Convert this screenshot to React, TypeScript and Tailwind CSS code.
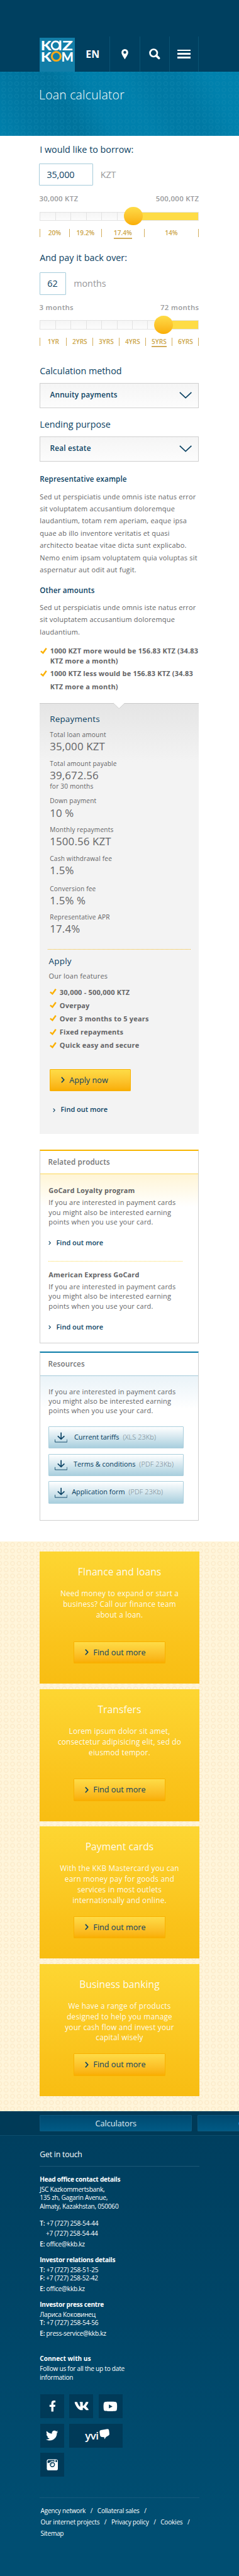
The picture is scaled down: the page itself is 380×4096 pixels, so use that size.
import type { ReactNode } from 'react'
import { FaFacebookF, FaTwitter, FaVk, FaYoutube } from 'react-icons/fa'

function Logo() {
  return (
    <svg viewBox="0 0 198 192" className="h-64 w-66 bg-[#127ea8]" aria-label="Kazkom">
      <g fill="#fff" fontFamily="Lato, sans-serif" fontWeight="900" fontSize="76">
        <text x="6" y="71" textLength="60" lengthAdjust="spacingAndGlyphs">K</text>
        <text x="128" y="71" textLength="60" lengthAdjust="spacingAndGlyphs">Z</text>
        <text x="6" y="134" textLength="60" lengthAdjust="spacingAndGlyphs">K</text>
        <text x="123" y="134" textLength="69" lengthAdjust="spacingAndGlyphs">M</text>
      </g>
      <circle cx="91" cy="44" r="23" fill="none" stroke="#fff" strokeWidth="10" />
      <path d="M117 16V71" stroke="#fff" strokeWidth="11" />
      <circle cx="94" cy="105" r="25" fill="#127ea8" stroke="#f9a91a" strokeWidth="11" />
    </svg>
  )
}

function Chevron({ className }: { className: string }) {
  return (
    <svg viewBox="0 0 7 12" className={className} fill="none" stroke="#0b4263" strokeWidth="2">
      <path d="M1 1L5.6 6L1 11" />
    </svg>
  )
}

function Check({ className }: { className: string }) {
  return (
    <svg viewBox="0 0 13 12" className={`h-12 w-13 shrink-0 ${className}`} fill="none" stroke="#fbb000" strokeWidth="2.9">
      <path d="M1 6.4L5.2 9.8L11.6 1" />
    </svg>
  )
}

function Slider({ segments, fill, knob }: { segments: number; fill: string; knob: string }) {
  return (
    <div className="relative flex h-17 w-300 border border-[#e3e3e3] bg-gradient-to-b from-[#f5f5f5] to-[#fcfcfc]">
      {Array.from({ length: segments }, (_, i) => (
        <span key={i} className="w-29 border-r border-[#e3e3e3]" />
      ))}
      <span className={`absolute inset-y-0 right-0 bg-[#fedc46] ${fill}`} />
      <span className={`absolute -top-10.5 size-35 rounded-full bg-gradient-to-b from-[#fedc46] to-[#f9ae00] ${knob}`} />
    </div>
  )
}

function Scale({ items }: { items: { label: string; width: string; active?: boolean }[] }) {
  return (
    <div className="mt-16 flex h-15 w-300 border-r border-[#d3ad5c] text-[10.12px] font-semibold leading-15 text-[#cca54a]">
      {items.map((it) => (
        <div key={it.label} className={`flex justify-center border-l border-[#d3ad5c] ${it.width}`}>
          <span className={it.active ? 'h-18 border-b-2 border-[#d3ad5c]' : 'h-18'}>{it.label}</span>
        </div>
      ))}
    </div>
  )
}

function Select({ value }: { value: string }) {
  return (
    <div className="flex h-47 items-center justify-between border border-[#cfcfcf] bg-gradient-to-b from-[#f5f5f5] to-[#fcfcfc] pl-18 pr-12">
      <span className="-mt-2 text-[11.81px] font-semibold tracking-[0.2px]">{value}</span>
      <svg viewBox="0 0 24 13" className="h-13 w-24" fill="none" stroke="#0b4263" strokeWidth="2">
        <path d="M1 1L12 11.5L23 1" />
      </svg>
    </div>
  )
}

function Figure({ label, value, className }: { label: string; value: string; className: string }) {
  return (
    <div className={className}>
      <p className="text-[10.12px] leading-16 tracking-[0.19px]">{label}</p>
      <p className="mt-0.75 text-[16.87px] leading-26 tracking-[0.14px]">{value}</p>
    </div>
  )
}

function MoreLink({ className }: { className: string }) {
  return (
    <a className={`flex items-center text-[10.97px] font-semibold leading-20 text-[#0b4263] ${className}`}>
      <Chevron className="mr-9.5 mt-1 h-8 w-5" />
      Find out more
    </a>
  )
}

function YellowButton({ children, className }: { children: ReactNode; className: string }) {
  return (
    <a className={`flex h-42 items-center rounded-[1px] border border-[#f9b000] bg-gradient-to-b from-[#fedc46] to-[#f9ae00] pb-1 text-[12.66px] text-[#0b4263] ${className}`}>
      <Chevron className="mr-9 h-12 w-7" />
      {children}
    </a>
  )
}

function Product({ name, className }: { name: string; className: string }) {
  return (
    <div className={`pl-15.5 ${className}`}>
      <h4 className="text-[10.97px] font-bold leading-18 tracking-[0.17px]">{name}</h4>
      <Blurb className="mt-5.25" />
      <MoreLink className="mt-21.25" />
    </div>
  )
}

function Blurb({ className }: { className: string }) {
  return (
    <p className={`text-[10.97px] leading-18 tracking-[0.21px] ${className}`}>
      If you are interested in payment cards
      <br />
      you might also be interested earning
      <br />
      points when you use your card.
    </p>
  )
}

function Download({ name, kind, gap }: { name: string; kind: string; gap: string }) {
  return (
    <a className="flex h-42 w-255 items-center rounded-[1px] border border-[#a9cedc] bg-gradient-to-b from-white to-[#a9cfde] pl-11 text-[10.9px]">
      <svg viewBox="0 0 24 20" className="h-20 w-24" fill="none" stroke="#0b4263">
        <path d="M12 1V13.5M5.7 7.5L12 13.5L18.3 7.5" strokeWidth="2" />
        <path d="M.5 14V19H23.5V14" strokeWidth="1.1" />
      </svg>
      <span className={`-mt-1.5 text-[#003a5c] ${gap}`}>{name}</span>
      <span className="-mt-1.5 ml-7 text-[10.97px] font-light tracking-[0.08px] text-[#70828c]">{kind}</span>
    </a>
  )
}

function Promo({ title, lines }: { title: string; lines: string[] }) {
  return (
    <section className="flex h-249 flex-col items-center bg-gradient-to-b from-[#fdd632] via-[#fac31b] via-70% to-[#f8bd12] pt-26 text-white">
      <h3 className="text-[15.6px] leading-26 tracking-[0.08px] text-white/95">{title}</h3>
      <p className="mt-16.75 h-80 text-center text-[11.81px] leading-20 tracking-[0.21px] text-white/95">
        {lines.map((l) => (
          <span key={l} className="block">{l}</span>
        ))}
      </p>
      <YellowButton className="mt-20.25 w-172 pl-19.5">Find out more</YellowButton>
    </section>
  )
}

function Field({ k, v }: { k: string; v: string }) {
  return (
    <p>
      <b className="font-semibold">{k}</b> {v}
    </p>
  )
}

function Tile({ children, wide }: { children: ReactNode; wide?: boolean }) {
  return <a className={`flex h-45 items-center justify-center bg-[#003a58] ${wide ? 'w-100' : 'w-45'}`}>{children}</a>
}

const rates = [
  { label: '20%', width: 'w-55' },
  { label: '19.2%', width: 'w-61' },
  { label: '17.4%', width: 'w-80', active: true },
  { label: '14%', width: 'w-103' },
]

const years = [
  { label: '1YR', width: 'w-50' },
  { label: '2YRS', width: 'w-50' },
  { label: '3YRS', width: 'w-50' },
  { label: '4YRS', width: 'w-50' },
  { label: '5YRS', width: 'w-50', active: true },
  { label: '6YRS', width: 'w-50' },
]

const promos = [
  { title: 'FInance and loans', lines: ['Need money to expand or start a', 'business? Call our finance team', 'about a loan.'] },
  { title: 'Transfers', lines: ['Lorem ipsum dolor sit amet,', 'consectetur adipisicing elit, sed do', 'eiusmod tempor.'] },
  { title: 'Payment cards', lines: ['With the KKB Mastercard you can', 'earn money pay for goods and', 'services in most outlets', 'internationally and online.'] },
  { title: 'Business banking', lines: ['We have a range of products', 'designed to help you manage', 'your cash flow and invest your', 'capital wisely'] },
]

const linkRows = [['Agency network', 'Collateral sales'], ['Our internet projects', 'Privacy policy', 'Cookies']]

export default function App() {
  return (
    <div className="flex h-[4096px] w-[380px] flex-col overflow-hidden bg-white font-['Open_Sans',sans-serif] text-[#636466] [--spacing:0.84367px]">
      <header className="flex h-135 shrink-0 items-end bg-[#004060] pl-75">
        <Logo />
        <nav className="flex h-66 text-white">
          <a className="flex w-67 items-center border-r border-[#0a5374] pl-20.5 text-[16.03px] font-bold">EN</a>
          <a className="flex w-56 items-center justify-center border-r border-[#0a5374]">
            <svg viewBox="0 0 13 20" className="h-20 w-13" fill="#fff">
              <path fillRule="evenodd" d="M6.5 0A6.3 6.3 0 0 0 .2 6.4C.2 11 4.5 14.5 6.5 20C8.5 14.5 12.8 11 12.8 6.4A6.3 6.3 0 0 0 6.5 0ZM6.5 3.5A2.7 2.7 0 1 1 6.5 8.9A2.7 2.7 0 0 1 6.5 3.5Z" />
            </svg>
          </a>
          <a className="flex w-56 items-center justify-center border-r border-[#0a5374]">
            <svg viewBox="0 0 21 21" className="size-21" fill="none" stroke="#fff">
              <circle cx="8.6" cy="8.6" r="6.8" strokeWidth="3.2" />
              <path d="M13.5 13.5L18.6 18.3" strokeWidth="4.2" strokeLinecap="round" />
            </svg>
          </a>
          <a className="flex w-55 flex-col items-center justify-center gap-4 border-r border-[#0a5374] pb-1">
            <span className="h-3 w-25 bg-white" />
            <span className="h-3 w-25 bg-white" />
            <span className="h-3 w-25 bg-white" />
          </a>
        </nav>
      </header>

      <div className="h-121 shrink-0 bg-[linear-gradient(62deg,#0080ac_0%,#0077a2_14%,#00739c_30%,#007fab_42%,#0080ac_56%,#007aa5_66%,#0079a4_76%,#0081ad_88%)]">
        <div className="h-full bg-[radial-gradient(circle,transparent_2.2px,#1a8db366_2.9px,#1a8db366_3.3px,transparent_4px)] bg-[length:10.3px_9.98px] bg-[position:0.8px_3.9px] pl-73.5 pt-27">
          <h1 className="text-[19.4px] font-light leading-32 tracking-[0.22px] text-white">Loan calculator</h1>
        </div>
      </div>

      <main className="ml-75 flex w-300 flex-col">
        <h2 className="mt-14.25 text-[14.34px] leading-24 text-[#0b4263]">I would like to borrow:</h2>
        <div className="-ml-1 mt-13.75 flex h-42 items-center text-[14.34px]">
          <span className="flex h-42 w-102 items-center rounded-[1px] border border-[#a5cbda] pl-13 tracking-[-0.12px] text-[#0b4263]">35,000</span>
          <span className="ml-13.5 tracking-[-0.2px] text-[#97989a]">KZT</span>
        </div>
        <div className="-ml-1 mt-15.5 flex justify-between text-[11.39px] font-semibold leading-20 tracking-[0.3px] text-[#97989a]">
          <span>30,000 KTZ</span>
          <span>500,000 KTZ</span>
        </div>
        <div className="h-13.5" />
        <Slider segments={5} fill="w-123" knob="left-157.5" />
        <Scale items={rates} />

        <h2 className="mt-27.25 text-[14.34px] leading-24 text-[#0b4263]">And pay it back over:</h2>
        <div className="mt-14.75 flex h-43 items-center text-[14.34px]">
          <span className="flex h-43 w-50 items-center justify-center rounded-[1px] border border-[#a5cbda] pr-2 text-[#0b4263]">62</span>
          <span className="ml-14 text-[#97989a]">months</span>
        </div>
        <div className="-ml-1 mt-14.5 flex justify-between text-[11.39px] font-semibold leading-20 tracking-[0.35px] text-[#97989a]">
          <span>3 months</span>
          <span>72 months</span>
        </div>
        <div className="h-13.5" />
        <Slider segments={7} fill="w-66" knob="left-214.5" />
        <Scale items={years} />

        <h2 className="mt-36.25 text-[14.34px] leading-24 text-[#0b4263]">Calculation method</h2>
        <div className="mt-9.75 text-[#0b4263]"><Select value="Annuity payments" /></div>
        <h2 className="mt-19.25 text-[14.34px] leading-24 text-[#0b4263]">Lending purpose</h2>
        <div className="mt-10.75 text-[#0b4263]"><Select value="Real estate" /></div>

        <h3 className="mt-24.25 text-[11.6px] font-semibold leading-20 tracking-[0.12px] text-[#0b4263]">Representative example</h3>
        <p className="mt-10 whitespace-nowrap text-[10.97px] leading-23 tracking-[0.21px]">
          Sed ut perspiciatis unde omnis iste natus error<br />
          sit voluptatem accusantium doloremque<br />
          laudantium, totam rem aperiam, eaque ipsa<br />
          quae ab illo inventore veritatis et quasi<br />
          architecto beatae vitae dicta sunt explicabo.<br />
          Nemo enim ipsam voluptatem quia voluptas sit<br />
          aspernatur aut odit aut fugit.
        </p>
        <h3 className="mt-18 text-[11.6px] font-semibold leading-20 tracking-[0.12px] text-[#0b4263]">Other amounts</h3>
        <p className="mt-10 whitespace-nowrap text-[10.97px] leading-23 tracking-[0.21px]">
          Sed ut perspiciatis unde omnis iste natus error<br />
          sit voluptatem accusantium doloremque<br />
          laudantium.
        </p>
        <ul className="mt-15.75 whitespace-nowrap text-[10.97px] font-bold tracking-[0.2px]">
          <li className="flex gap-6 pl-0.5 leading-18">
            <Check className="mt-3" />
            <span>1000 KZT more would be 156.83 KTZ (34.83<br />KTZ more a month)</span>
          </li>
          <li className="mt-4.25 flex gap-6 pl-0.5 leading-24.5">
            <Check className="mt-6" />
            <span>1000 KTZ less would be 156.83 KTZ (34.83<br />KTZ more a month)</span>
          </li>
        </ul>

        <section className="relative mt-17.75 h-812 border-t border-[#c9c9c9] bg-[#f3f3f3] bg-[linear-gradient(#e5e5e5,#f3f3f3_92px)] pl-19 pt-17">
          <svg viewBox="0 0 22 12" className="absolute -top-1.5 left-138 h-12 w-22">
            <path d="M0 0H22V1L11 11.5L0 1Z" fill="#fff" />
            <path d="M0 1L11 11.5L22 1" fill="none" stroke="#c9c9c9" />
          </svg>
          <h3 className="text-[13.5px] leading-24 tracking-[0.14px] text-[#0b4263]">Repayments</h3>
          <Figure className="mt-10.5" label="Total loan amount" value="35,000 KZT" />
          <Figure className="mt-11.25" label="Total amount payable" value="39,672.56" />
          <p className="mt-0.25 text-[10.12px] leading-16 tracking-[0.19px]">for 30 months</p>
          <Figure className="mt-12" label="Down payment" value="10 %" />
          <Figure className="mt-11.25" label="Monthly repayments" value="1500.56 KZT" />
          <Figure className="mt-12.25" label="Cash withdrawal fee" value="1.5%" />
          <Figure className="mt-13.25" label="Conversion fee" value="1.5% %" />
          <Figure className="mt-11.25" label="Representative APR" value="17.4%" />
          <div className="-ml-4 mt-25 h-px w-269 bg-[repeating-linear-gradient(90deg,#f6bb1e_0_1px,transparent_1px_2px)]" />
          <h3 className="-ml-2 mt-9.5 text-[13.5px] leading-24 tracking-[0.2px] text-[#0b4263]">Apply</h3>
          <p className="-ml-2 mt-6 text-[10.97px] leading-20 tracking-[0.21px]">Our loan features</p>
          <ul className="mt-7.5 text-[10.97px] font-bold leading-25 tracking-[0.21px]">
            {['30,000 - 500,000 KTZ', 'Overpay', 'Over 3 months to 5 years', 'Fixed repayments', 'Quick easy and secure'].map((f) => (
              <li key={f} className="flex gap-5.5">
                <Check className="mt-6.5" />
                {f}
              </li>
            ))}
          </ul>
          <YellowButton className="mt-33 w-152 pl-19.5">Apply now</YellowButton>
          <MoreLink className="ml-6 mt-24.75" />
        </section>

        <section className="mt-30 h-365 border border-t-2 border-[#d0d0d0] border-t-[#f7b500]">
          <h3 className="flex h-44 items-center border-b border-[#fcd856] pl-14.5 text-[11.6px] font-semibold tracking-[0.19px] text-[#737476]">Related products</h3>
          <div className="bg-[linear-gradient(#fff5d6,#ffffff_52px)] pt-21">
            <Product name="GoCard Loyalty program" className="" />
            <div className="ml-15.5 mt-24.5 h-px w-253 bg-[repeating-linear-gradient(90deg,#fbd94e_0_1px,transparent_1px_2px)]" />
            <Product name="American Express GoCard" className="mt-14.5" />
          </div>
        </section>

        <section className="mt-15 h-319 border border-t-2 border-[#d0d0d0] border-t-[#0a7ca8]">
          <h3 className="flex h-44 items-center border-b border-[#a5cbda] pl-14.5 text-[11.6px] font-semibold tracking-[0.1px] text-[#737476]">Resources</h3>
          <div className="flex flex-col gap-10 bg-[linear-gradient(#eaf3f8,#ffffff_52px)] pl-15 pt-20.75">
            <Blurb className="mb-10.25 pl-0.5" />
            <Download name="Current tariffs" kind="(XLS 23Kb)" gap="ml-12.5" />
            <Download name="Terms &amp; conditions" kind="(PDF 23Kb)" gap="ml-11.5" />
            <Download name="Application form" kind="(PDF 23Kb)" gap="ml-8" />
          </div>
        </section>
      </main>

      <div className="mt-39 flex h-1075 shrink-0 flex-col gap-10 bg-[#fff5da] bg-[radial-gradient(circle,transparent_2.2px,#fbe9c8_2.9px,#fbe9c8_3.4px,transparent_4.1px)] bg-[length:10.3px_9.98px] bg-[position:4.5px_0px] px-75 pt-20">
        {promos.map((p) => (
          <Promo key={p.title} {...p} />
        ))}
      </div>

      <div className="flex h-45.75 shrink-0 gap-10 overflow-hidden border-b border-[#0d4d6d] bg-[#003a57] pl-75 pt-7 text-[12.66px] text-[#e4eef3]">
        <a className="flex h-31 w-287 shrink-0 items-center justify-center rounded-[1px] border border-[#0d587e] bg-gradient-to-b from-[#004a70] to-[#005a85]">Calculators</a>
        <a className="flex h-31 w-287 shrink-0 items-center rounded-[1px] border border-[#0d587e] bg-gradient-to-b from-[#004a70] to-[#005a85] pl-76">C</a>
      </div>

      <footer className="flex-1 bg-gradient-to-b from-[#003f5f] to-[#004e72] to-90% px-75 pt-26.25 text-[10.12px] leading-16 tracking-[-0.25px] text-white">
        <h3 className="text-[12.23px] leading-20 tracking-[-0.18px]">Get in touch</h3>
        <hr className="mt-10.75 border-[#1c5776]" />
        <h4 className="mt-16 font-bold">Head office contact details</h4>
        <p className="mt-3">JSC Kazkommertsbank,<br />135 zh, Gagarin Avenue,<br />Almaty, Kazakhstan, 050060</p>
        <div className="mt-16 flex flex-col gap-4">
          <Field k="T:" v="+7 (727) 258-54-44" />
          <p className="pl-11.5">+7 (727) 258-54-44</p>
          <Field k="E:" v="office@kkb.kz" />
        </div>
        <h4 className="mt-13 font-bold">Investor relations details</h4>
        <div className="mb-4 mt-3">
          <Field k="T:" v="+7 (727) 258-51-25" />
          <Field k="F:" v="+7 (727) 258-52-42" />
        </div>
        <Field k="E:" v="office@kkb.kz" />
        <h4 className="mt-13 font-bold">Investor press centre</h4>
        <div className="mb-4 mt-3">
          <p>Лариса Коковинец</p>
          <Field k="T:" v="+7 (727) 258-54-56" />
        </div>
        <Field k="E:" v="press-service@kkb.kz" />
        <h4 className="mt-32 font-bold tracking-[0px]">Connect with us</h4>
        <p className="mt-3">Follow us for all the up to date<br />information</p>
        <div className="ml-1 mt-23.5 flex w-160 flex-wrap gap-10">
          <Tile><FaFacebookF className="h-21 w-13" /></Tile>
          <Tile><FaVk className="size-28" /></Tile>
          <Tile><FaYoutube className="size-27" /></Tile>
          <Tile><FaTwitter className="mt-1 size-23" /></Tile>
          <Tile wide>
            <span className="mt-1 ml-5 text-[17px] font-semibold leading-20 tracking-[-0.6px]">yvi</span>
            <svg viewBox="0 0 19 20" className="-mt-5 ml-2 h-20 w-19" fill="#fff">
              <path d="M3 2.5L15 .3Q17.8 0 18.2 3L18.9 9.5Q19 12 17 12.8L12.5 15.5L9.8 19.5L9 15.6L4.5 15.5Q1.8 15.3 1.3 12.5L.3 5.5Q.2 3 3 2.5Z" />
            </svg>
          </Tile>
          <Tile>
            <svg viewBox="0 0 22 22" className="size-22">
              <rect x=".5" y=".5" width="21" height="21" rx="3.5" fill="#fff" />
              <path d="M2 7.5V4Q2 2 4 2H15V7.5Z" fill="#003a58" />
              <rect x="16.8" y="2" width="3.2" height="3.6" fill="#003a58" />
              <circle cx="11" cy="10.5" r="6.5" fill="#fff" />
              <circle cx="11" cy="10.5" r="4" fill="#fff" stroke="#003a58" strokeWidth="1.8" />
              <path d="M9 10.5A2 2 0 0 1 11 8.5" stroke="#003a58" fill="none" />
            </svg>
          </Tile>
        </div>
        <hr className="mt-39.5 border-[#17597c]" />
        <div className="mt-14 pl-1.5 leading-21">
          {linkRows.map((row) => (
            <p key={row[0]} className="flex whitespace-nowrap">
              {row.map((l) => (
                <span key={l} className="mr-9 flex gap-9">{l}<span>/</span></span>
              ))}
            </p>
          ))}
          <p>Sitemap</p>
        </div>
      </footer>
    </div>
  )
}
